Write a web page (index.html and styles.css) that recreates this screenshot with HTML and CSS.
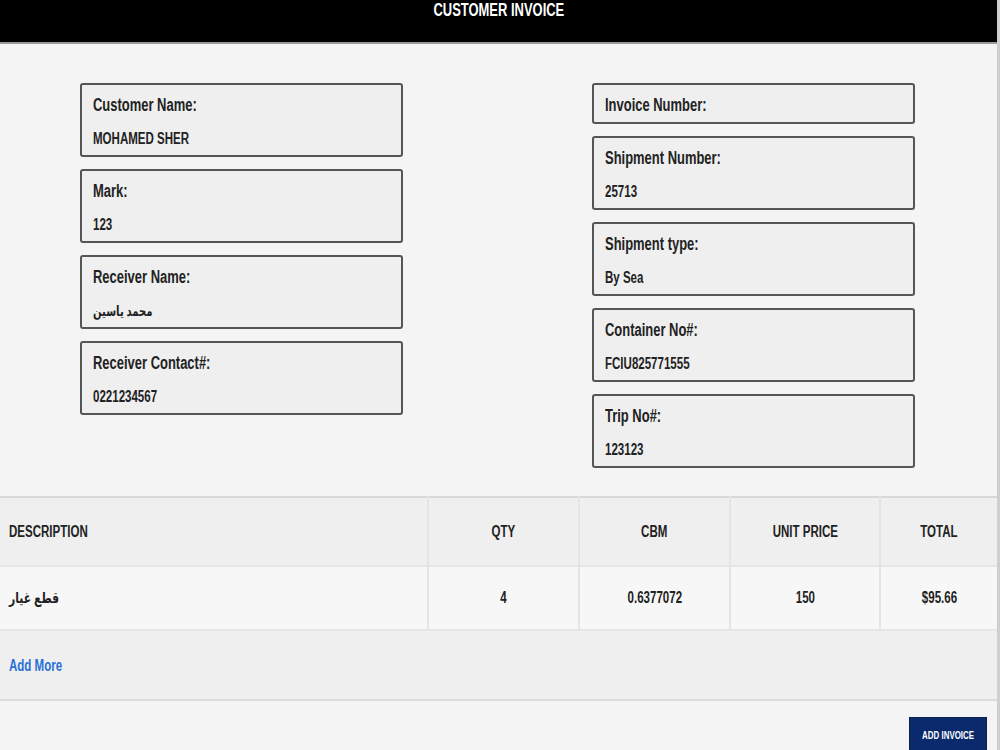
FILE: index.html
```html
<!DOCTYPE html>
<html lang="en">
  <head>
    <meta charset="UTF-8" />
    <meta name="viewport" content="width=device-width, initial-scale=1.0" />
    <title>Customer Invoice</title>
    <link rel="stylesheet" href="styles.css">
  </head>
  <body>
    <div class="page">
      <div class="title"><span class="sq">CUSTOMER INVOICE</span></div>
      <div class="details">
        <div class="col">
          <div class="box">
            <label>Customer Name:</label>
            <div class="val">MOHAMED SHER</div>
          </div>
          <div class="box">
            <label>Mark:</label>
            <div class="val">123</div>
          </div>
          <div class="box">
            <label>Receiver Name:</label>
            <div class="val ar">محمد ياسين</div>
          </div>
          <div class="box">
            <label>Receiver Contact#:</label>
            <div class="val">0221234567</div>
          </div>
        </div>
        <div class="col">
          <div class="box short">
            <label>Invoice Number:</label>
          </div>
          <div class="box">
            <label>Shipment Number:</label>
            <div class="val">25713</div>
          </div>
          <div class="box">
            <label>Shipment type:</label>
            <div class="val">By Sea</div>
          </div>
          <div class="box">
            <label>Container No#:</label>
            <div class="val">FCIU825771555</div>
          </div>
          <div class="box">
            <label>Trip No#:</label>
            <div class="val">123123</div>
          </div>
        </div>
      </div>
      <table class="items">
        <thead>
          <tr>
            <th class="desc"><span class="sq">DESCRIPTION</span></th>
            <th class="c-qty"><span class="sq">QTY</span></th>
            <th class="c-cbm"><span class="sq">CBM</span></th>
            <th class="c-price"><span class="sq">UNIT PRICE</span></th>
            <th class="c-total"><span class="sq">TOTAL</span></th>
          </tr>
        </thead>
        <tbody>
          <tr class="row">
            <td class="desc"><span class="sq ar">قطع غيار</span></td>
            <td><span class="sq">4</span></td>
            <td><span class="sq">0.6377072</span></td>
            <td><span class="sq">150</span></td>
            <td><span class="sq">$95.66</span></td>
          </tr>
          <tr class="more">
            <td colspan="5"><a href="#" class="sq">Add More</a></td>
          </tr>
        </tbody>
      </table>
      <div class="actions">
        <button type="button"><span class="sq">ADD INVOICE</span></button>
      </div>
    </div>
  </body>
</html>
```

FILE: styles.css
```css
body {
  margin: 0;
  background: #f4f4f4;
  font-family: "Liberation Sans", Arial, "DejaVu Sans", sans-serif;
  font-weight: bold;
  color: #222;
}
.page {
  border-right: 3px solid #cfcfcf;
  min-height: 750px;
  box-sizing: border-box;
}
/* narrow lettering used across the whole form */
.sq {
  display: inline-block;
  transform: scaleX(0.72);
  transform-origin: center;
}
.title {
  background: #000;
  color: #fff;
  height: 44px;
  text-align: center;
  font-size: 18px;
  line-height: 20px;
  border-bottom: 2px solid #9a9a9a;
  box-sizing: border-box;
}
.details {
  display: grid;
  grid-template-columns: 323px 323px;
  column-gap: 189px;
  padding: 39px 80px 28px;
}
.col {
  display: flex;
  flex-direction: column;
  gap: 12px;
}
.box {
  height: 74px;
  box-sizing: border-box;
  border: 2px solid #555;
  border-radius: 3px;
  background: #efefef;
  padding: 10px 11px 0;
}
.box.short {
  height: 41px;
}
label,
.val {
  display: block;
  transform: scaleX(0.72);
  transform-origin: left;
  white-space: nowrap;
}
label {
  font-size: 18px;
  line-height: 20px;
}
.val {
  margin-top: 14px;
  font-size: 16px;
  line-height: 20px;
}
.val.ar {
  font-size: 14px;
}
.items {
  width: 100%;
  border-collapse: collapse;
  border-top: 2px solid #d8d8d8;
  border-bottom: 2px solid #dcdcdc;
  table-layout: fixed;
}
.items th,
.items td {
  text-align: center;
  border-left: 2px solid #e4e4e4;
  font-size: 16px;
  padding: 0;
  white-space: nowrap;
}
.items th {
  background: #efefef;
  height: 67px;
}
.c-qty,
.c-cbm {
  width: 149px;
}
.c-price {
  width: 148px;
}
.c-total {
  width: 116px;
}
.items .desc {
  text-align: left;
  padding-left: 9px;
  border-left: none;
}
.items .desc .sq {
  transform-origin: left;
}
.row td {
  background: #f7f7f7;
  height: 62px;
  border-top: 2px solid #e6e6e6;
  border-bottom: 2px solid #e6e6e6;
}
.row .ar {
  font-size: 15px;
}
.more td {
  background: #efefef;
  height: 66px;
  padding-top: 2px;
  text-align: left;
  padding-left: 9px;
  border-left: none;
}
.more a {
  color: #2a6fd6;
  text-decoration: none;
  transform-origin: left;
}
.actions {
  display: flex;
  justify-content: flex-end;
  padding: 16px 10px 0 0;
}
button {
  width: 78px;
  height: 36px;
  background: #0b2a6e;
  color: #fff;
  border: 1px solid #081f52;
  font-family: inherit;
  font-size: 11px;
  font-weight: bold;
  padding: 0;
  white-space: nowrap;
}
```
